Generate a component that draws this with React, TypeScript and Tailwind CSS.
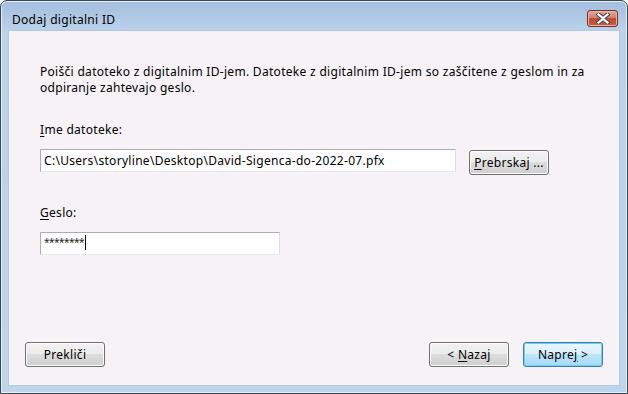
import React from "react";

const font = { fontFamily: '"Noto Sans", "Open Sans", sans-serif' };

function Btn({ children, className = "", focused = false }: { children: React.ReactNode; className?: string; focused?: boolean }) {
  return (
    <div
      className={
        "flex items-center justify-center h-[25px] w-[80px] rounded-[3px] text-[12px] text-black " +
        (focused
          ? "border border-[#3c7fb1] bg-[linear-gradient(#eaf6fd_0%,#d9f0fc_50%,#bee6fd_50%,#a7d9f5_100%)] shadow-[inset_0_0_0_1px_#6fd0f6]"
          : "border border-[#707070] bg-[linear-gradient(#f2f2f2_0%,#ebebeb_50%,#dddddd_50%,#cfcfcf_100%)] shadow-[inset_0_0_0_1px_#fcfcfc]") +
        " " +
        className
      }
    >
      {children}
    </div>
  );
}

export default function App() {
  return (
    <div className="w-[628px] h-[394px] bg-white tracking-[0.3px]" style={font}>
      <div className="w-[628px] h-[394px] rounded-t-[7px] border border-[#394654] bg-[linear-gradient(#a3bedc_0px,#bad2ea_30px,#bfd5ec_100%)] flex flex-col px-[7px] pb-[7px] shadow-[inset_0_0_0_1px_#e6eef8]">
        <div className="h-[29px] flex items-start pt-[8px] pl-[4px] relative">
          <span className="text-[12px] leading-[15px] text-black mt-[3px]">Dodaj digitalni ID</span>
          <div className="ml-auto mt-[1px] mr-[2px] w-[31px] h-[17px] rounded-[3px] border border-[#6f3330] bg-[linear-gradient(#e3a79a_0%,#d2806e_45%,#c24b34_50%,#cc5a3e_100%)] shadow-[inset_0_0_0_1px_#e9b3a6] flex items-center justify-center">
            <svg width="14" height="11" viewBox="0 0 14 11">
              <path d="M2.5 1.5 L7 5 L11.5 1.5 M2.5 9.5 L7 6 L11.5 9.5" stroke="#4a4a4a" strokeWidth="4.2" strokeLinecap="square" fill="none" />
              <path d="M2.5 1.5 L7 5 L11.5 1.5 M2.5 9.5 L7 6 L11.5 9.5" stroke="#ffffff" strokeWidth="2.2" strokeLinecap="square" fill="none" />
            </svg>
          </div>
        </div>
        <div className="flex-1 bg-[#f6f2f6] border border-[#b4c8e0] flex flex-col">
          <div className="pl-[31px] pt-[33px] text-[12px] leading-[16px] text-black">
            <p>Poišči datoteko z digitalnim ID-jem. Datoteke z digitalnim ID-jem so zaščitene z geslom in za</p>
            <p>odpiranje zahtevajo geslo.</p>
          </div>
          <div className="pl-[31px] mt-[26px] text-[12px] leading-[16px] text-black">
            <span className="underline underline-offset-2">I</span>me datoteke:
          </div>
          <div className="pl-[31px] mt-[11px] flex items-start">
            <div className="w-[416px] h-[23px] bg-white border border-[#abadb3] border-r-[#dbdfe6] border-b-[#e3e9ef] flex items-center pl-[3px] text-[12px] text-black">
              C:\Users\storyline\Desktop\David-Sigenca-do-2022-07.pfx
            </div>
            <Btn className="ml-[13px] mt-[1px]">
              <span><span className="underline underline-offset-2">P</span>rebrskaj ...</span>
            </Btn>
          </div>
          <div className="pl-[31px] mt-[30px] text-[12px] leading-[16px] text-black">
            <span className="underline underline-offset-2">G</span>eslo:
          </div>
          <div className="pl-[31px] mt-[11px]">
            <div className="w-[240px] h-[23px] bg-white border border-[#abadb3] border-r-[#dbdfe6] border-b-[#e3e9ef] flex items-start pt-[2px] pl-[3px] text-black">
              <span className="text-[10px] leading-[15px] tracking-[-0.5px] text-[#222]">********</span>
              <span className="w-px h-[15px] bg-black ml-[1px]" />
            </div>
          </div>
          <div className="mt-auto mb-[18px] px-[16px] flex items-center">
            <Btn>Prekliči</Btn>
            <Btn className="ml-auto">
              <span>&lt; <span className="underline underline-offset-2">N</span>azaj</span>
            </Btn>
            <Btn focused className="ml-[14px]">
              <span>Nap<span>re</span><span className="underline underline-offset-2">j</span> &gt;</span>
            </Btn>
          </div>
        </div>
      </div>
    </div>
  );
}
